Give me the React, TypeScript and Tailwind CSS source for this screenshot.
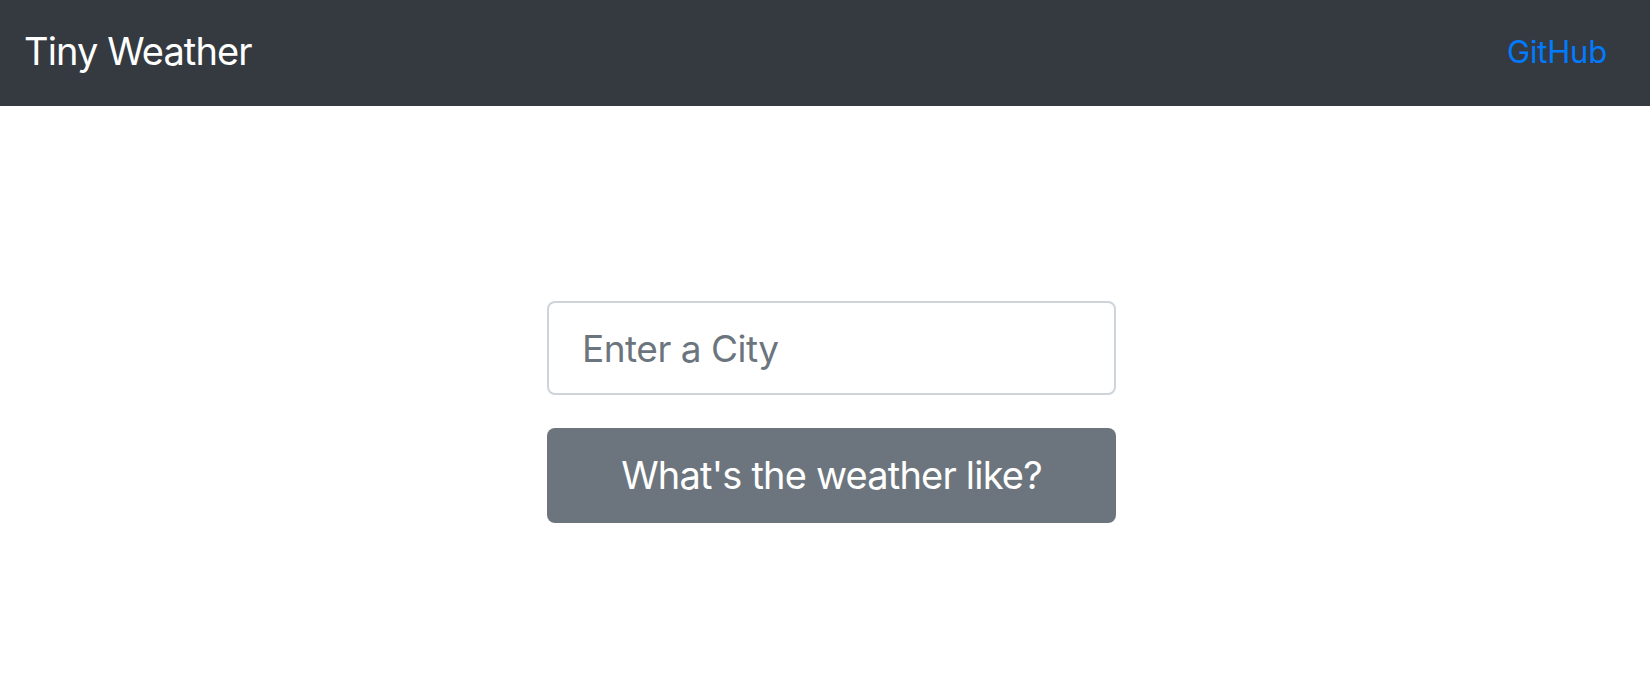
export default function App() {
  return (
    <div className="min-h-[674px] bg-white font-['Inter',_'Liberation_Sans',_sans-serif]">
      <nav className="flex h-[106px] items-center justify-between bg-[#343a40] pl-[24px] pr-[43px] pb-[4px]">
        <a href="#" className="text-[38px] leading-none tracking-[-0.9px] text-white">
          Tiny Weather
        </a>
        <a href="#" className="text-[31px] leading-none tracking-[-0.2px] text-[#007bff]">
          GitHub
        </a>
      </nav>

      <main className="flex justify-center pl-[13px] pt-[195px]">
        <form className="flex w-[569px] flex-col gap-[33px]" onSubmit={(e) => e.preventDefault()}>
          <input
            type="text"
            placeholder="Enter a City"
            className="h-[94px] w-full rounded-[8px] border-2 border-[#ced4da] bg-white px-[33px] text-[37px] tracking-[-0.5px] text-[#495057] placeholder-[#6c757d] outline-none"
          />
          <button
            type="submit"
            className="h-[95px] w-full rounded-[8px] bg-[#6c757d] text-[38px] tracking-[-0.8px] text-white"
          >
            What's the weather like?
          </button>
        </form>
      </main>
    </div>
  );
}
